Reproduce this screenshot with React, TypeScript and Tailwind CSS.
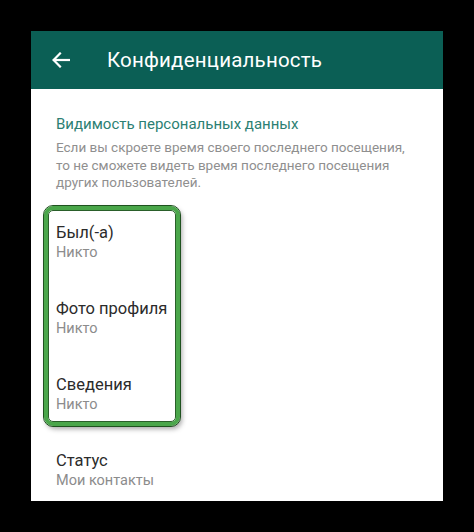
import React from 'react';

const items = [
	{ title: 'Был(-а)', value: 'Никто' },
	{ title: 'Фото профиля', value: 'Никто' },
	{ title: 'Сведения', value: 'Никто' },
];

const Row = ({ title, value, className }: { title: string; value: string; className: string }) => (
	<div className={className}>
		<div className="text-[16.5px] leading-[21px] text-[#2b2b2b]">{title}</div>
		<div className="text-[14.5px] leading-[20px] text-[#8c8c8c]">{value}</div>
	</div>
);

export default function App() {
	return (
		<div className="w-[474px] h-[532px] bg-black pt-[31px] pl-[31px] font-['Roboto',_'Noto_Sans',_sans-serif]">
			<div className="w-[412px] h-[470px] bg-white overflow-hidden">
				{/* Toolbar */}
				<div className="h-[58px] bg-[#0b5f55] flex items-center pl-[21px]">
					<svg width="18" height="16" viewBox="0 0 18 16" fill="none" stroke="white" strokeWidth="2.2" strokeLinecap="square">
						<path d="M17 8H2" />
						<path d="M8 1.5L1.6 8L8 14.5" />
					</svg>
					<div className="ml-[37px] text-white text-[20.5px] leading-none tracking-[0.2px]">Конфиденциальность</div>
				</div>

				<div className="pl-[25px] pr-[10px]">
					<div className="mt-[25px] text-[15px] leading-[20px] text-[#2c7f73]">Видимость персональных данных</div>
					<div className="mt-[5px] text-[13.5px] leading-[17.5px] text-[#8f8f8f] whitespace-nowrap">
						Если вы скроете время своего последнего посещения,
						<br />
						то не сможете видеть время последнего посещения
						<br />
						других пользователей.
					</div>

					{/* Highlighted block */}
					<div className="mt-[14px] -ml-[12px] w-[136px] h-[220px] rounded-[9px] border-[4px] border-[#4aa64a] outline outline-1 outline-[#1f521f] shadow-[2px_3px_5px_rgba(0,0,0,0.35)] pl-[8px] pt-[12px] relative">
						<div className="absolute inset-0 rounded-[5px] border border-[#2a5f2a] pointer-events-none" />
						{items.map((it, i) => (
							<Row key={i} title={it.title} value={it.value} className={i < 2 ? 'h-[76px]' : ''} />
						))}
					</div>

					<Row title="Статус" value="Мои контакты" className="mt-[24px]" />
				</div>
			</div>
		</div>
	);
}
